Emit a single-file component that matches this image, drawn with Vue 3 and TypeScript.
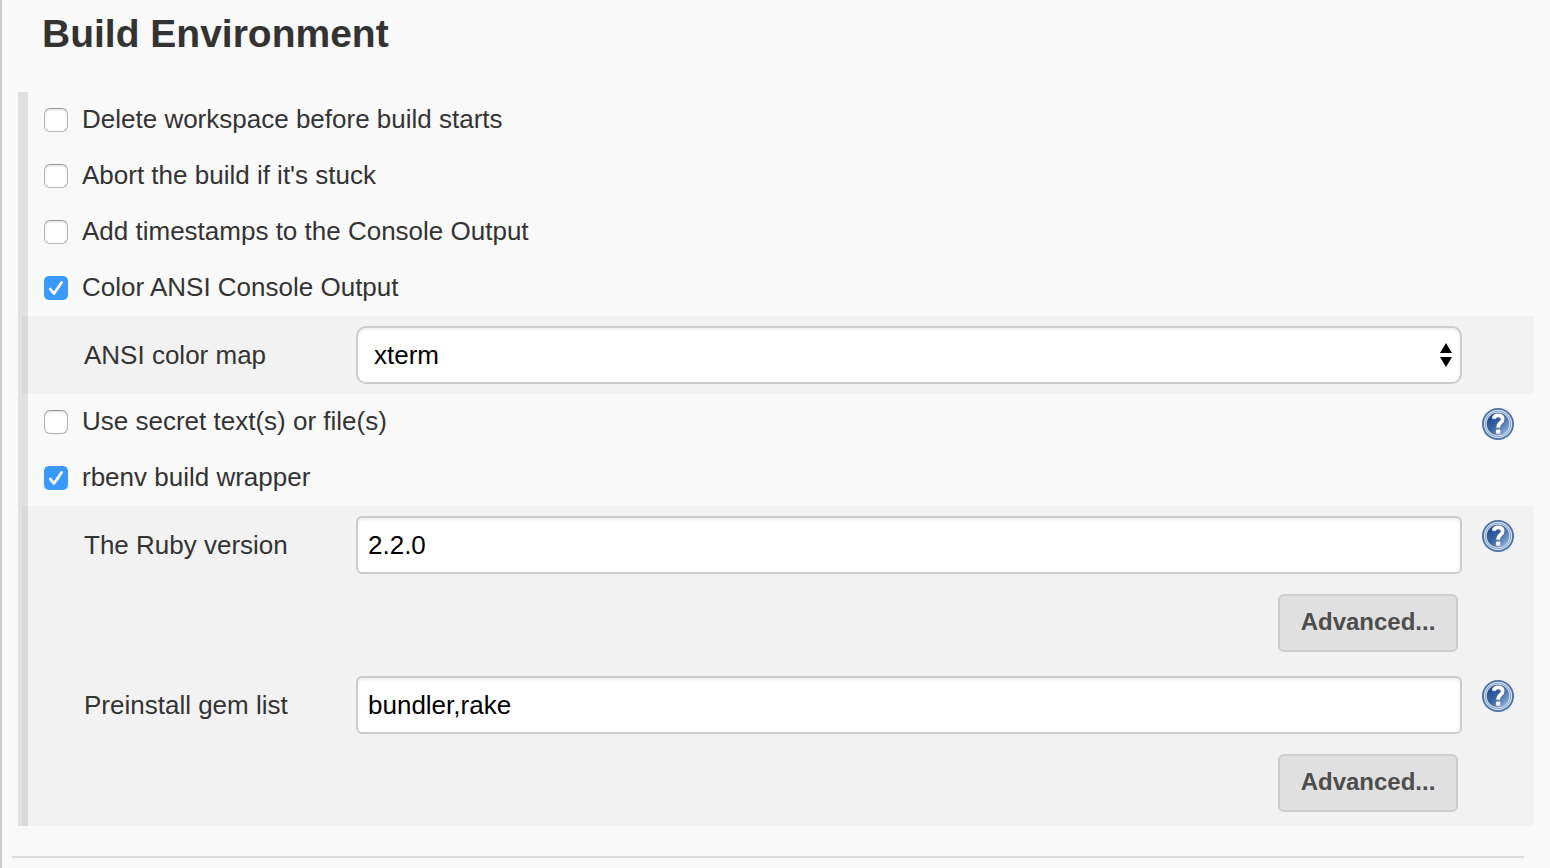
<script setup lang="ts">
import { ref } from 'vue'

interface Field {
  id: string
  label: string
  kind: 'select' | 'text'
  value: string
  help: boolean
  advanced: boolean
}

interface Option {
  id: string
  label: string
  checked: boolean
  help: boolean
  fields: Field[]
}

const options = ref<Option[]>([
  { id: 'delete-workspace', label: 'Delete workspace before build starts', checked: false, help: false, fields: [] },
  { id: 'abort-stuck', label: "Abort the build if it's stuck", checked: false, help: false, fields: [] },
  { id: 'timestamps', label: 'Add timestamps to the Console Output', checked: false, help: false, fields: [] },
  {
    id: 'ansi-color',
    label: 'Color ANSI Console Output',
    checked: true,
    help: false,
    fields: [
      { id: 'color-map', label: 'ANSI color map', kind: 'select', value: 'xterm', help: false, advanced: false },
    ],
  },
  { id: 'secrets', label: 'Use secret text(s) or file(s)', checked: false, help: true, fields: [] },
  {
    id: 'rbenv',
    label: 'rbenv build wrapper',
    checked: true,
    help: false,
    fields: [
      { id: 'ruby-version', label: 'The Ruby version', kind: 'text', value: '2.2.0', help: true, advanced: true },
      { id: 'gem-list', label: 'Preinstall gem list', kind: 'text', value: 'bundler,rake', help: true, advanced: true },
    ],
  },
])

const colorMaps = ['xterm', 'vga', 'css', 'gnome-terminal']
</script>

<template>
  <main class="page">
    <svg class="defs" width="0" height="0" aria-hidden="true">
      <defs>
        <linearGradient id="help-fill" x1="0" y1="0" x2="1" y2="1">
          <stop offset="0.15" stop-color="#1f4a8c" />
          <stop offset="0.5" stop-color="#3d66a3" />
          <stop offset="0.95" stop-color="#9db9de" />
        </linearGradient>
        <symbol id="help-icon" viewBox="0 0 32 32">
          <circle cx="16" cy="16" r="16" fill="#4a70aa" />
          <circle cx="16" cy="16" r="14.2" fill="#d3deee" />
          <circle cx="16" cy="16" r="13" fill="#7f9cc8" />
          <circle cx="16" cy="16" r="12.2" fill="#d3deee" />
          <circle cx="16" cy="16" r="11.2" fill="url(#help-fill)" />
          <path
            d="M11.6 10.8C12 8.4 13.8 7.4 16.2 7.4C19 7.4 20.7 8.8 20.7 11.1C20.7 13 19.7 14 18.3 15C16.8 16.1 16.2 17 16.2 19.8"
            fill="none"
            stroke="#fff"
            stroke-width="3.7"
          />
          <rect x="14.1" y="21.6" width="4.2" height="4.2" rx="0.8" fill="#fff" />
        </symbol>
      </defs>
    </svg>

    <h1 class="title">Build Environment</h1>

    <section class="options" aria-label="Build Environment">
      <template v-for="option in options" :key="option.id">
        <div class="option">
          <input :id="option.id" v-model="option.checked" class="check" type="checkbox" />
          <label class="option-label" :for="option.id">{{ option.label }}</label>
          <button v-if="option.help" class="help" type="button" :aria-label="`Help: ${option.label}`">
            <svg width="32" height="32" aria-hidden="true"><use href="#help-icon" /></svg>
          </button>
        </div>

        <div v-if="option.checked && option.fields.length" class="nested">
          <div v-for="field in option.fields" :key="field.id" class="field">
            <label class="field-label" :for="field.id">{{ field.label }}</label>
            <div v-if="field.kind === 'select'" class="select-wrap">
              <select :id="field.id" v-model="field.value" class="control select">
                <option v-for="map in colorMaps" :key="map" :value="map">{{ map }}</option>
              </select>
              <svg class="arrows" width="12" height="24" viewBox="0 0 12 24" aria-hidden="true">
                <path d="M6 0L12 10H0ZM0 14H12L6 24Z" fill="#000" />
              </svg>
            </div>
            <input v-else :id="field.id" v-model="field.value" class="control" type="text" />
            <button v-if="field.help" class="help" type="button" :aria-label="`Help: ${field.label}`">
              <svg width="32" height="32" aria-hidden="true"><use href="#help-icon" /></svg>
            </button>
            <button v-if="field.advanced" class="advanced" type="button">Advanced...</button>
          </div>
        </div>
      </template>
    </section>

    <hr class="divider" />
  </main>
</template>

<style>
body {
  margin: 0;
  background: #f9f9f9;
}
</style>

<style scoped>
* {
  box-sizing: border-box;
}

.page {
  min-height: 100vh;
  padding: 10px 16px;
  border-left: 2px solid #ccc;
  background: #f9f9f9;
  color: #333;
  font-family: "Liberation Sans", Arial, sans-serif;
  font-size: 26px;
  line-height: 32px;
}

.defs {
  position: absolute;
}

.title {
  margin: 0 0 34px 24px;
  font-size: 39px;
  line-height: 48px;
  font-weight: 700;
}

.options {
  background: linear-gradient(#e0e0e0, #e0e0e0) left / 10px 100% no-repeat;
}

.option {
  display: flex;
  align-items: center;
  height: 56px;
  padding: 0 20px 0 26px;
}

.option-label {
  margin-left: 14px;
  padding-bottom: 2px;
}

.check {
  appearance: none;
  flex: none;
  width: 24px;
  height: 24px;
  margin: 0;
  border: 1px solid #b4b4b4;
  border-top-color: #999;
  border-radius: 6px;
  background: #fff;
  box-shadow: inset 0 1px 2px rgba(0, 0, 0, 0.16);
}

.check:checked {
  border: 0;
  border-radius: 5px;
  box-shadow: none;
  background: #3b99fc
    url("data:image/svg+xml,%3Csvg xmlns='http://www.w3.org/2000/svg' viewBox='0 0 24 24'%3E%3Cpath d='M6.2 13L10 17.6L17.6 6.4' fill='none' stroke='white' stroke-width='2.7' stroke-linecap='round' stroke-linejoin='round'/%3E%3C/svg%3E")
    center / 24px 24px no-repeat;
}

.help {
  flex: none;
  align-self: start;
  width: 32px;
  height: 32px;
  margin: 4px 0 0;
  padding: 0;
  border: 0;
  background: none;
}

.help svg {
  display: block;
}

.option .help {
  margin: 14px 0 0 auto;
}

.nested {
  margin-left: 4px;
  background: rgba(0, 0, 0, 0.027);
}

.field {
  display: grid;
  grid-template-columns: 252px minmax(0, 1fr) 32px;
  column-gap: 20px;
  row-gap: 20px;
  align-items: center;
  padding: 10px 20px 10px 62px;
}

.field:has(.advanced) {
  padding-bottom: 14px;
}

.select-wrap {
  position: relative;
}

.control {
  display: block;
  width: 100%;
  height: 58px;
  margin: 0;
  padding: 0 10px;
  border: 2px solid #ccc;
  border-radius: 6px;
  background: #fff;
  box-shadow: inset 0 2px 3px rgba(0, 0, 0, 0.07);
  color: #000;
  font: inherit;
}

.select {
  appearance: none;
  padding: 0 16px;
  border-radius: 10px;
}

.arrows {
  position: absolute;
  top: 17px;
  right: 10px;
  pointer-events: none;
}

.advanced {
  grid-column: 2;
  justify-self: end;
  width: 180px;
  height: 58px;
  margin: 0 4px 0 0;
  padding: 0 0 2px;
  border: 2px solid #ccc;
  border-radius: 6px;
  background: #e0e0e0;
  color: #4d4d4d;
  font: inherit;
  font-size: 24px;
  font-weight: 700;
}

.divider {
  height: 2px;
  margin: 30px 10px 0 -6px;
  border: 0;
  background: #ddd;
}
</style>
